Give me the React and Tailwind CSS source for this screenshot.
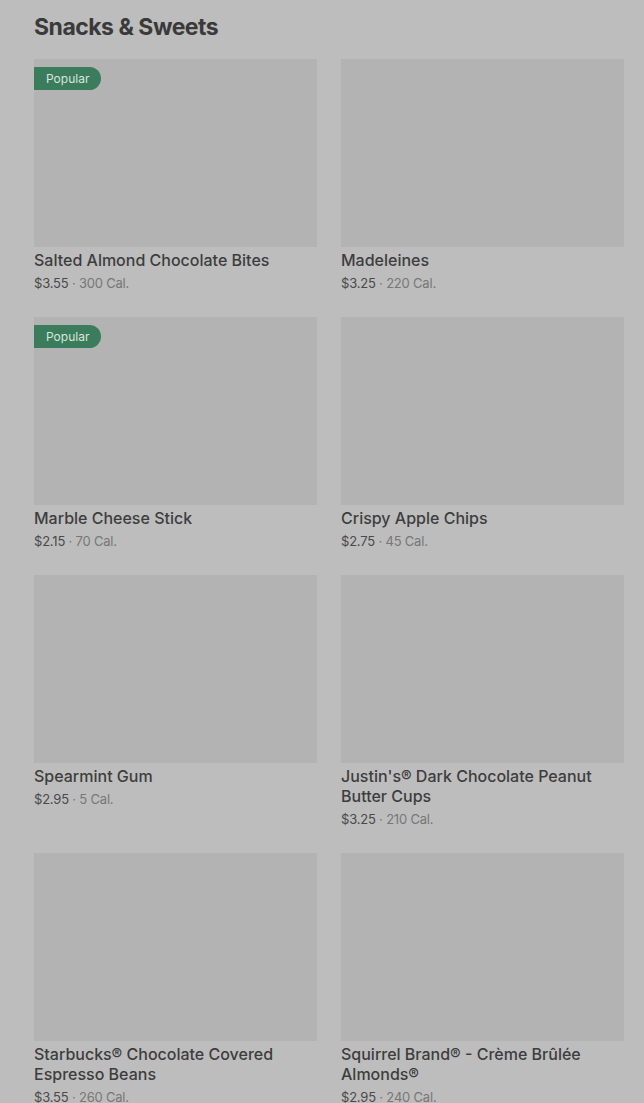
import React from "react";

const items = [
  { name: "Salted Almond Chocolate Bites", price: "$3.55", cal: "300 Cal.", popular: true },
  { name: "Madeleines", price: "$3.25", cal: "220 Cal." },
  { name: "Marble Cheese Stick", price: "$2.15", cal: "70 Cal.", popular: true },
  { name: "Crispy Apple Chips", price: "$2.75", cal: "45 Cal." },
  { name: "Spearmint Gum", price: "$2.95", cal: "5 Cal." },
  { name: "Justin's® Dark Chocolate Peanut Butter Cups", price: "$3.25", cal: "210 Cal." },
  { name: "Starbucks® Chocolate Covered Espresso Beans", price: "$3.55", cal: "260 Cal." },
  { name: "Squirrel Brand® - Crème Brûlée Almonds®", price: "$2.95", cal: "240 Cal." },
];

const Card = ({ item }) => (
  <div className="flex flex-col">
    <div className="relative h-[188px] bg-[#b3b3b3]">
      {item.popular && (
        <span className="absolute left-0 top-[8px] flex h-[23px] items-center rounded-r-full bg-[#3b7c5c] pl-[12px] pr-[12px] text-[12px] text-[#d8e6dd]">
          Popular
        </span>
      )}
    </div>
    <div className="mt-[3px] text-[16px] font-medium leading-[20px] text-[#3d3d3d]">
      {item.name}
    </div>
    <div className="mt-[4px] text-[13px] leading-[18px] tracking-[-0.2px]">
      <span className="text-[#4a4a4a]">{item.price}</span>
      <span className="text-[#777777]"> · {item.cal}</span>
    </div>
  </div>
);

const App = () => {
  return (
    <div
      className="min-h-screen bg-[#bdbdbd] pl-[34px] pr-[20px] pt-[13px]"
      style={{ fontFamily: "Inter, 'Liberation Sans', sans-serif" }}
    >
      <h2 className="mb-[18px] text-[23px] font-bold leading-[28px] tracking-[-0.5px] text-[#3a3a3a]">
        Snacks &amp; Sweets
      </h2>
      <div className="grid grid-cols-2 gap-x-[24px] gap-y-[25px]">
        {items.map((item) => (
          <Card key={item.name} item={item} />
        ))}
      </div>
    </div>
  );
};

export default App;
